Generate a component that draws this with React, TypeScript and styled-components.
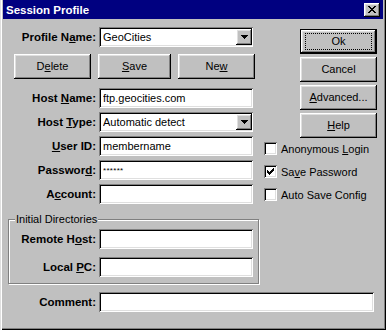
import React from 'react';
import styled, { createGlobalStyle } from 'styled-components';

const Global = createGlobalStyle`
  html, body { margin: 0; padding: 0; background: #c0c0c0; }
  body { font-family: "Liberation Sans", Arial, sans-serif; }
  #root { width: 386px; height: 330px; }
`;

const raised = `
  box-shadow: inset -1px -1px 0 #000, inset 1px 1px 0 #fff, inset -2px -2px 0 #808080, inset 2px 2px 0 #dfdfdf;
`;
const sunken = `
  box-shadow: inset 1px 1px 0 #808080, inset -1px -1px 0 #fff, inset 2px 2px 0 #000, inset -2px -2px 0 #dfdfdf;
`;

const Window = styled.div`
  width: 386px;
  height: 330px;
  box-sizing: border-box;
  background: #c0c0c0;
  padding: 0 3px 3px 3px;
  box-shadow: inset 1px 0 0 #dfdfdf, inset 2px 0 0 #fff, inset -1px -1px 0 #000, inset -2px -2px 0 #808080;
  display: flex;
  flex-direction: column;
  font-family: "Liberation Sans", Arial, sans-serif;
  font-size: 11px;
  color: #000;
  overflow: hidden;
`;

const TitleBar = styled.div`
  height: 19px;
  flex: none;
  background: #000080;
  color: #fff;
  font-weight: bold;
  font-size: 11.5px;
  display: flex;
  align-items: center;
  justify-content: space-between;
  padding: 0 3px 0 3px;
`;

const CloseButton = styled.div`
  width: 16px;
  height: 14px;
  background: #c0c0c0;
  ${raised}
  display: flex;
  align-items: center;
  justify-content: center;
  padding-bottom: 1px;
  box-sizing: border-box;
`;

const Body = styled.div`
  display: flex;
  flex-direction: column;
  padding-top: 8px;
`;

const Top = styled.div`
  display: flex;
`;

const LeftCol = styled.div`
  width: 257px;
  display: flex;
  flex-direction: column;
`;

const RightCol = styled.div`
  flex: 1;
  display: flex;
  flex-direction: column;
  padding-top: 2px;
`;

const Row = styled.div<{ $mt?: number }>`
  display: flex;
  align-items: center;
  height: 20px;
  margin-top: ${(p) => p.$mt ?? 0}px;
`;

const Label = styled.div<{ $w: number }>`
  width: ${(p) => p.$w}px;
  margin-right: 3px;
  text-align: right;
  font-weight: bold;
  font-size: 11.5px;
  white-space: nowrap;
`;

const Field = styled.div<{ $w: number }>`
  width: ${(p) => p.$w}px;
  height: 20px;
  box-sizing: border-box;
  background: #fff;
  ${sunken}
  display: flex;
  align-items: center;
  padding: 2px 2px 2px 4px;
  font-size: 11px;
  white-space: nowrap;
`;

const FieldText = styled.span`
  flex: 1;
  overflow: hidden;
`;

const Stars = styled.span`
  font-size: 8px;
  letter-spacing: 0.3px;
  position: relative;
  top: -1px;
`;

const DropButton = styled.div`
  width: 16px;
  height: 16px;
  margin-right: -1px;
  background: #c0c0c0;
  ${raised}
  display: flex;
  align-items: center;
  justify-content: center;
  flex: none;
`;

const ButtonRow = styled.div`
  display: flex;
  margin: 7px 0 0 11px;
  gap: 7px;
`;

const Button = styled.div<{ $w?: number; $default?: boolean }>`
  width: ${(p) => p.$w ?? 77}px;
  height: 25px;
  box-sizing: border-box;
  background: #c0c0c0;
  ${(p) =>
    p.$default
      ? `box-shadow: inset 0 0 0 1px #000, inset -2px -2px 0 #000, inset 2px 2px 0 #fff, inset -3px -3px 0 #808080, inset 3px 3px 0 #dfdfdf;`
      : raised}
  display: flex;
  align-items: center;
  justify-content: center;
  font-size: 11px;
  position: relative;
  padding-bottom: 1px;
`;

const FocusRing = styled.div`
  position: absolute;
  inset: 4px 5px 4px 5px;
  border: 1px dotted #000;
`;

const ButtonStack = styled.div`
  display: flex;
  flex-direction: column;
  gap: 3px;
  margin-left: 40px;
`;

const CheckList = styled.div`
  display: flex;
  flex-direction: column;
  gap: 10px;
  margin: 4px 0 0 4px;
`;

const CheckRow = styled.div`
  display: flex;
  align-items: center;
  height: 13px;
  font-size: 11px;
  white-space: nowrap;
`;

const Box = styled.div`
  width: 13px;
  height: 13px;
  box-sizing: border-box;
  background: #fff;
  ${sunken}
  margin-right: 4px;
  display: flex;
  align-items: center;
  justify-content: center;
  flex: none;
`;

const Group = styled.div`
  position: relative;
  width: 251px;
  box-sizing: border-box;
  margin: 15px 0 0 5px;
  border: 1px solid #808080;
  box-shadow: inset 1px 1px 0 #fff, 1px 1px 0 #fff;
  padding: 9px 0 6px 0;
  display: flex;
  flex-direction: column;
  gap: 8px;
`;

const Legend = styled.div`
  position: absolute;
  top: -8px;
  left: 6px;
  padding: 0 1px;
  background: #c0c0c0;
  font-size: 11px;
  line-height: 14px;
`;

const Pixels: React.FC<{ w: number; h: number; rows: string[] }> = ({ w, h, rows }) => (
  <svg width={w} height={h} viewBox={`0 0 ${w} ${h}`} shapeRendering="crispEdges">
    {rows.map((r, y) =>
      r.split('').map((c, x) => (c === 'X' ? <rect key={`${x}-${y}`} x={x} y={y} width={1} height={1} fill="#000" /> : null))
    )}
  </svg>
);

const closeGlyph = ['XX....XX', '.XX..XX.', '..XXXX..', '...XX...', '..XXXX..', '.XX..XX.', 'XX....XX'];
const arrowGlyph = ['XXXXXXX', '.XXXXX.', '..XXX..', '...X...'];
const checkGlyph = ['......X', '.....XX', 'X...XXX', 'XX.XXX.', 'XXXXX..', '.XXX...', '..X....'];

const Combo: React.FC<{ w: number; text: string }> = ({ w, text }) => (
  <Field $w={w}>
    <FieldText>{text}</FieldText>
    <DropButton>
      <Pixels w={7} h={4} rows={arrowGlyph} />
    </DropButton>
  </Field>
);

const Check: React.FC<{ checked?: boolean; children: React.ReactNode }> = ({ checked, children }) => (
  <CheckRow>
    <Box>{checked && <Pixels w={7} h={7} rows={checkGlyph} />}</Box>
    <span>{children}</span>
  </CheckRow>
);

export default function App() {
  return (
    <>
      <Global />
      <Window>
        <TitleBar>
          <span>Session Profile</span>
          <CloseButton>
            <Pixels w={8} h={7} rows={closeGlyph} />
          </CloseButton>
        </TitleBar>
        <Body>
          <Top>
            <LeftCol>
              <Row>
                <Label $w={93}>
                  Profile N<u>a</u>me:
                </Label>
                <Combo w={154} text="GeoCities" />
              </Row>
              <ButtonRow>
                <Button $w={77}>
                  D<u>e</u>lete
                </Button>
                <Button $w={73}>
                  <u>S</u>ave
                </Button>
                <Button $w={77}>
                  Ne<u>w</u>
                </Button>
              </ButtonRow>
              <Row $mt={9}>
                <Label $w={93}>
                  Host <u>N</u>ame:
                </Label>
                <Field $w={154}>
                  <FieldText>ftp.geocities.com</FieldText>
                </Field>
              </Row>
              <Row $mt={4}>
                <Label $w={93}>
                  Host <u>T</u>ype:
                </Label>
                <Combo w={154} text="Automatic detect" />
              </Row>
              <Row $mt={4}>
                <Label $w={93}>
                  <u>U</u>ser ID:
                </Label>
                <Field $w={154}>
                  <FieldText>membername</FieldText>
                </Field>
              </Row>
              <Row $mt={4}>
                <Label $w={93}>
                  Passwor<u>d</u>:
                </Label>
                <Field $w={154}>
                  <FieldText>
                    <Stars>******</Stars>
                  </FieldText>
                </Field>
              </Row>
              <Row $mt={4}>
                <Label $w={93}>
                  A<u>c</u>count:
                </Label>
                <Field $w={154} />
              </Row>
              <Group>
                <Legend>Initial Directories</Legend>
                <Row>
                  <Label $w={87}>
                    Remote H<u>o</u>st:
                  </Label>
                  <Field $w={154} />
                </Row>
                <Row>
                  <Label $w={87}>
                    Local <u>P</u>C:
                  </Label>
                  <Field $w={154} />
                </Row>
              </Group>
            </LeftCol>
            <RightCol>
              <ButtonStack>
                <Button $default>
                  <FocusRing />
                  Ok
                </Button>
                <Button>Cancel</Button>
                <Button>
                  <u>A</u>dvanced...
                </Button>
                <Button>
                  <u>H</u>elp
                </Button>
              </ButtonStack>
              <CheckList>
                <Check>
                  Anonymous <u>L</u>ogin
                </Check>
                <Check checked>
                  Sa<u>v</u>e Password
                </Check>
                <Check>Auto Save Config</Check>
              </CheckList>
            </RightCol>
          </Top>
          <Row $mt={8}>
            <Label $w={93}>Comment:</Label>
            <Field $w={275} />
          </Row>
        </Body>
      </Window>
    </>
  );
}
